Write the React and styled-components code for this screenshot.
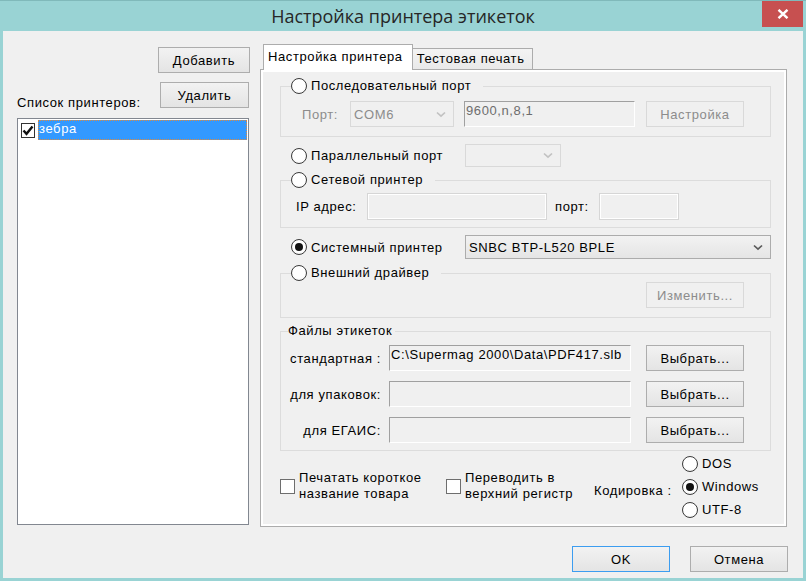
import React from 'react'
import styled, { createGlobalStyle } from 'styled-components'

const GlobalStyle = createGlobalStyle`
  html, body { margin: 0; padding: 0; background: #99d3d4; }
  body {
    font-family: "Liberation Sans", Arial, sans-serif;
    font-size: 13px;
    letter-spacing: 0.6px;
    color: #000;
  }
  * { box-sizing: border-box; }
`

const Window = styled.div`
  width: 806px;
  height: 581px;
  display: flex;
  flex-direction: column;
  padding: 0 3px 3px 3px;
  background: #99d3d4;
  border-top: 1px solid #80b9ba;
`

const TitleBar = styled.div`
  height: 30px;
  display: grid;
  grid-template-columns: 1fr auto 1fr;
  align-items: start;
`

const Title = styled.div`
  grid-column: 2;
  font-family: "Open Sans", "Noto Sans", sans-serif;
  font-size: 18px;
  letter-spacing: 0;
  line-height: 30px;
  color: #262626;
`

const CloseButton = styled.div`
  grid-column: 3;
  justify-self: end;
  width: 41px;
  height: 26px;
  background: #c75050;
  display: flex;
  align-items: center;
  justify-content: center;
`

const Client = styled.div`
  flex: 1;
  background: #f0f0f0;
  display: flex;
  flex-direction: column;
  padding: 13px 16px 0 14px;
`

const Main = styled.div`
  height: 483px;
  display: flex;
  gap: 11px;
`

const LeftPane = styled.div`
  width: 232px;
  display: flex;
  flex-direction: column;
  padding-bottom: 2px;
`

const Button = styled.button`
  width: ${p => p.$w || 98}px;
  height: 26px;
  flex-shrink: 0;
  padding: 0;
  font: inherit;
  letter-spacing: inherit;
  color: ${p => (p.disabled ? '#8c8c8c' : '#000')};
  border: 1px solid ${p => (p.$default ? '#3c9df0' : p.disabled ? '#d9d9d9' : '#adadad')};
  background: ${p => (p.disabled ? '#f0f0f0' : 'linear-gradient(#f2f2f2, #e4e4e4)')};
  align-self: ${p => p.$align || 'auto'};
  margin: ${p => p.$m || '0'};
`

const DeleteRow = styled.div`
  display: flex;
  justify-content: space-between;
  align-items: flex-end;
  margin-top: 9px;
`

const Caption = styled.span`
  line-height: 16px;
  margin-bottom: ${p => p.$mb || 0}px;
  white-space: nowrap;
`

const ListBox = styled.div`
  flex: 1;
  margin-top: 10px;
  border: 1px solid #828790;
  background: #fff;
  padding: 1px;
`

const ListItem = styled.div`
  height: 20px;
  display: flex;
  align-items: center;
`

const ListCheck = styled.span`
  width: 14px;
  height: 15px;
  margin: 0 3px 0 2px;
  border: 1px solid #333;
  background: #fff;
  display: flex;
  align-items: center;
  justify-content: center;
`

const ItemLabel = styled.span`
  flex: 1;
  height: 20px;
  line-height: 18px;
  padding-left: 1px;
  background: #3399ff;
  color: #fff;
  outline: 1px dotted #e08a3c;
  outline-offset: -1px;
`

const Tabs = styled.div`
  width: 527px;
  display: flex;
  flex-direction: column;
`

const TabStrip = styled.div`
  height: 25px;
  display: flex;
  align-items: flex-end;
  padding-left: 3px;
`

const Tab = styled.div`
  height: ${p => (p.$active ? 26 : 21)}px;
  margin-bottom: ${p => (p.$active ? -1 : 0)}px;
  padding: ${p => (p.$active ? '4px 9px 0 4px' : '2px 7px 0 4px')};
  background: ${p => (p.$active ? '#fff' : 'linear-gradient(#f3f3f3, #e9e9e9)')};
  border: 1px solid #acacac;
  border-bottom: none;
  border-left: ${p => (p.$active ? '1px solid #acacac' : 'none')};
  position: relative;
  z-index: 1;
  white-space: nowrap;
`

const Panel = styled.div`
  flex: 1;
  border: 1px solid #acacac;
  box-shadow: inset 0 0 0 2px #fff;
  padding: 8px 15px 0 19px;
  display: flex;
  flex-direction: column;
`

const Group = styled.fieldset`
  margin: ${p => p.$mt}px 0 0 0;
  padding: 0;
  min-width: 0;
  border: 1px solid #dcdcdc;
`

const Legend = styled.legend`
  height: 16px;
  margin-left: ${p => p.$ml || 10}px;
  padding: 0 ${p => p.$pr || 12}px 0 0;
  display: flex;
  align-items: center;
  line-height: 16px;
`

const GroupBody = styled.div`
  padding: ${p => p.$pad};
  display: flex;
  flex-direction: ${p => (p.$column ? 'column' : 'row')};
  justify-content: ${p => p.$justify || 'flex-start'};
  align-items: ${p => (p.$column ? 'stretch' : 'center')};
  gap: ${p => p.$gap || 0}px;
`

const Row = styled.div`
  display: flex;
  align-items: center;
  height: ${p => p.$h || 26}px;
  margin-top: ${p => p.$mt || 0}px;
  padding-left: ${p => p.$pl || 0}px;
`

const Label = styled.span`
  width: ${p => (p.$w ? `${p.$w}px` : 'auto')};
  flex-shrink: 0;
  margin: ${p => p.$m || '0'};
  text-align: ${p => p.$align || 'left'};
  color: ${p => (p.$disabled ? '#8c8c8c' : '#000')};
  white-space: nowrap;
`

const RadioOption = styled.label`
  display: flex;
  align-items: center;
  gap: 4px;
  width: ${p => (p.$w ? `${p.$w}px` : 'auto')};
  height: ${p => p.$h || 16}px;
  flex-shrink: 0;
  white-space: nowrap;
`

const RadioCircle = styled.span`
  width: 16px;
  height: 16px;
  flex-shrink: 0;
  border-radius: 50%;
  border: 1px solid #3a3a3a;
  background: radial-gradient(circle at 50% 45%, #ffffff 55%, #e6e6e6 100%);
  display: flex;
  align-items: center;
  justify-content: center;

  &::after {
    content: '';
    display: ${p => (p.$checked ? 'block' : 'none')};
    width: 8px;
    height: 8px;
    border-radius: 50%;
    background: #111;
  }
`

const Combo = styled.div`
  width: ${p => p.$w}px;
  height: ${p => p.$h || 24}px;
  flex-shrink: 0;
  margin-left: ${p => p.$ml || 0}px;
  display: flex;
  align-items: center;
  padding: 0 7px 0 3px;
  border: 1px solid ${p => (p.$disabled ? '#d9d9d9' : '#acacac')};
  background: ${p => (p.$disabled ? '#f0f0f0' : 'linear-gradient(#f2f2f2, #e5e5e5)')};
  color: ${p => (p.$disabled ? '#8c8c8c' : '#000')};

  svg { margin-left: auto; }
`

const Edit = styled.div`
  width: ${p => p.$w}px;
  height: ${p => p.$h || 26}px;
  flex-shrink: 0;
  margin: ${p => p.$m || '0'};
  padding: 1px 1px;
  line-height: 15px;
  background: #f0f0f0;
  color: ${p => p.$color || '#000'};
  border: 1px solid;
  border-color: ${p => (p.$flat ? '#d6d6d6' : '#a0a0a0 #fff #fff #a0a0a0')};
  box-shadow: ${p => (p.$flat ? 'inset 0 0 0 1px #fff' : 'none')};
  white-space: nowrap;
  overflow: hidden;
`

const Options = styled.div`
  height: 69px;
  margin-top: 1px;
  display: flex;
  align-items: flex-start;
`

const CheckOption = styled.label`
  width: ${p => p.$w}px;
  margin-top: 18px;
  display: flex;
  align-items: center;
  gap: 4px;
  line-height: 16px;
  flex-shrink: 0;
`

const CheckBox = styled.span`
  width: 15px;
  height: 15px;
  flex-shrink: 0;
  border: 1px solid #6e6e6e;
  background: #fff;
`

const Encoding = styled.span`
  width: 88px;
  align-self: center;
  margin-top: 7px;
  flex-shrink: 0;
`

const RadioStack = styled.div`
  display: flex;
  flex-direction: column;
`

const Footer = styled.div`
  margin-top: 19px;
  margin-right: -1px;
  display: flex;
  justify-content: flex-end;
  gap: 20px;
`

function Chevron({ color = '#5a5a5a' }) {
  return (
    <svg width="10" height="7" viewBox="0 0 10 7">
      <path d="M1 1.5 L5 5.2 L9 1.5" fill="none" stroke={color} strokeWidth="1.7" />
    </svg>
  )
}

function Radio({ checked, children, w, h }) {
  return (
    <RadioOption $w={w} $h={h}>
      <RadioCircle $checked={checked} />
      {children}
    </RadioOption>
  )
}

export default function App() {
  return (
    <>
      <GlobalStyle />
      <Window>
        <TitleBar>
          <Title>Настройка принтера этикеток</Title>
          <CloseButton>
            <svg width="12" height="10" viewBox="0 0 12 10">
              <path d="M1.5 0.8 L10.5 9.2 M10.5 0.8 L1.5 9.2" stroke="#fff" strokeWidth="2.4" />
            </svg>
          </CloseButton>
        </TitleBar>

        <Client>
          <Main>
            <LeftPane>
              <Button $w={92} $align="flex-end" $m="3px -1px 0 0">Добавить</Button>
              <DeleteRow>
                <Caption $mb={-3}>Список принтеров:</Caption>
                <Button $w={89}>Удалить</Button>
              </DeleteRow>
              <ListBox>
                <ListItem>
                  <ListCheck>
                    <svg width="12" height="11" viewBox="0 0 12 11">
                      <path d="M1.5 5.5 L4.5 8.8 L10.5 1.5" fill="none" stroke="#111" strokeWidth="2.4" />
                    </svg>
                  </ListCheck>
                  <ItemLabel>зебра</ItemLabel>
                </ListItem>
              </ListBox>
            </LeftPane>

            <Tabs>
              <TabStrip>
                <Tab $active>Настройка принтера</Tab>
                <Tab>Тестовая печать</Tab>
              </TabStrip>
              <Panel>
                <Group $mt={0}>
                  <Legend><Radio>Последовательный порт</Radio></Legend>
                  <GroupBody $pad="7px 0 9px 21px">
                    <Label $w={37} $disabled>Порт:</Label>
                    <Combo $w={104} $h={26} $ml={11} $disabled>
                      COM6
                      <Chevron color="#c2c2c2" />
                    </Combo>
                    <Edit $w={171} $m="0 0 0 10px" $color="#6d6d6d">9600,n,8,1</Edit>
                    <Button $w={98} disabled $m="0 0 0 11px">Настройка</Button>
                  </GroupBody>
                </Group>

                <Row $h={23} $mt={7} $pl={11}>
                  <Radio w={174}>Параллельный порт</Radio>
                  <Combo $w={96} $h={23} $disabled>
                    <Chevron color="#c2c2c2" />
                  </Combo>
                </Row>

                <Group $mt={5}>
                  <Legend><Radio>Сетевой принтер</Radio></Legend>
                  <GroupBody $pad="5px 0 7px 15px">
                    <Label $w={71}>IP адрес:</Label>
                    <Edit $w={180} $h={27} $flat />
                    <Label $w={44} $m="0 0 0 8px">порт:</Label>
                    <Edit $w={80} $h={27} $flat />
                  </GroupBody>
                </Group>

                <Row $h={24} $mt={7} $pl={11}>
                  <Radio w={174} checked>Системный принтер</Radio>
                  <Combo $w={306} $h={24}>
                    SNBC BTP-L520 BPLE
                    <Chevron />
                  </Combo>
                </Row>

                <Group $mt={6}>
                  <Legend><Radio>Внешний драйвер</Radio></Legend>
                  <GroupBody $pad="1px 26px 9px 0" $justify="flex-end">
                    <Button $w={98} disabled>Изменить...</Button>
                  </GroupBody>
                </Group>

                <Group $mt={5}>
                  <Legend $ml={7} $pr={3}>Файлы этикеток</Legend>
                  <GroupBody $pad="6px 26px 7px 0" $column $gap={10}>
                    <Row>
                      <Label $w={100} $align="right" $m="0 8px 0 0">стандартная :</Label>
                      <Edit $w={242} $m="0 15px 0 0">C:\Supermag 2000\Data\PDF417.slb</Edit>
                      <Button $w={98}>Выбрать...</Button>
                    </Row>
                    <Row>
                      <Label $w={100} $align="right" $m="0 8px 0 0">для упаковок:</Label>
                      <Edit $w={242} $m="0 15px 0 0" />
                      <Button $w={98}>Выбрать...</Button>
                    </Row>
                    <Row>
                      <Label $w={100} $align="right" $m="0 8px 0 0">для ЕГАИС:</Label>
                      <Edit $w={242} $m="0 15px 0 0" />
                      <Button $w={98}>Выбрать...</Button>
                    </Row>
                  </GroupBody>
                </Group>

                <Options>
                  <CheckOption $w={166}>
                    <CheckBox />
                    <span>Печатать короткое<br />название товара</span>
                  </CheckOption>
                  <CheckOption $w={148}>
                    <CheckBox />
                    <span>Переводить в<br />верхний регистр</span>
                  </CheckOption>
                  <Encoding>Кодировка :</Encoding>
                  <RadioStack>
                    <Radio h={23}>DOS</Radio>
                    <Radio h={23} checked>Windows</Radio>
                    <Radio h={23}>UTF-8</Radio>
                  </RadioStack>
                </Options>
              </Panel>
            </Tabs>
          </Main>

          <Footer>
            <Button $w={98} $default>OK</Button>
            <Button $w={98}>Отмена</Button>
          </Footer>
        </Client>
      </Window>
    </>
  )
}
